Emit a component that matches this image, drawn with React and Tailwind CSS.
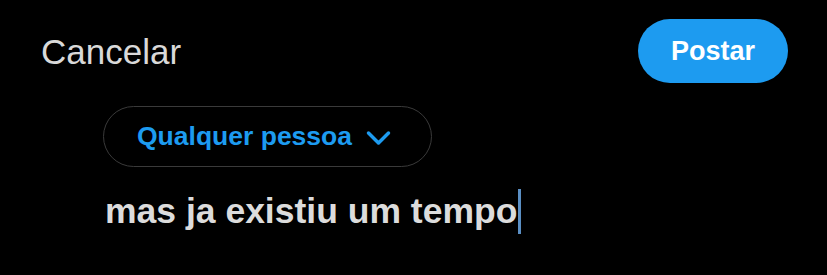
export default function App() {
  return (
    <div className="w-[827px] h-[275px] bg-black overflow-hidden" style={{ fontFamily: '"Liberation Sans", Arial, sans-serif' }}>
      {/* Top bar */}
      <header className="flex items-center justify-between pl-[41px] pr-[39px] pt-[19px]">
        <button className="text-[35px] leading-none text-[#d9d9d9]">Cancelar</button>
        <button className="w-[150px] h-[64px] rounded-full bg-[#1d9bf0] text-white text-[27px] font-bold leading-none">
          Postar
        </button>
      </header>

      {/* Composer */}
      <div className="pl-[103px] pt-[23px]">
        <button className="flex items-center gap-[14px] h-[61px] w-[329px] pl-[33px] rounded-full border-[1.5px] border-[#3a3a3a] text-[#1d9bf0] text-[26.5px] font-bold leading-none">
          <span>Qualquer pessoa</span>
          <svg width="25" height="16" viewBox="0 0 25 16" fill="none" className="mt-[2px]">
            <path d="M2.5 3 L12.5 13 L22.5 3" stroke="#1d9bf0" strokeWidth="3.5" strokeLinecap="round" strokeLinejoin="round" />
          </svg>
        </button>
        <div className="flex items-center mt-[22px] pl-[2px] text-[35.5px] font-bold leading-none text-[#dcdcdc]">
          <span>mas ja existiu um tempo</span>
          <span className="w-[3px] h-[45px] bg-[#5b8fc4] ml-[1px]" />
        </div>
      </div>
    </div>
  );
}
